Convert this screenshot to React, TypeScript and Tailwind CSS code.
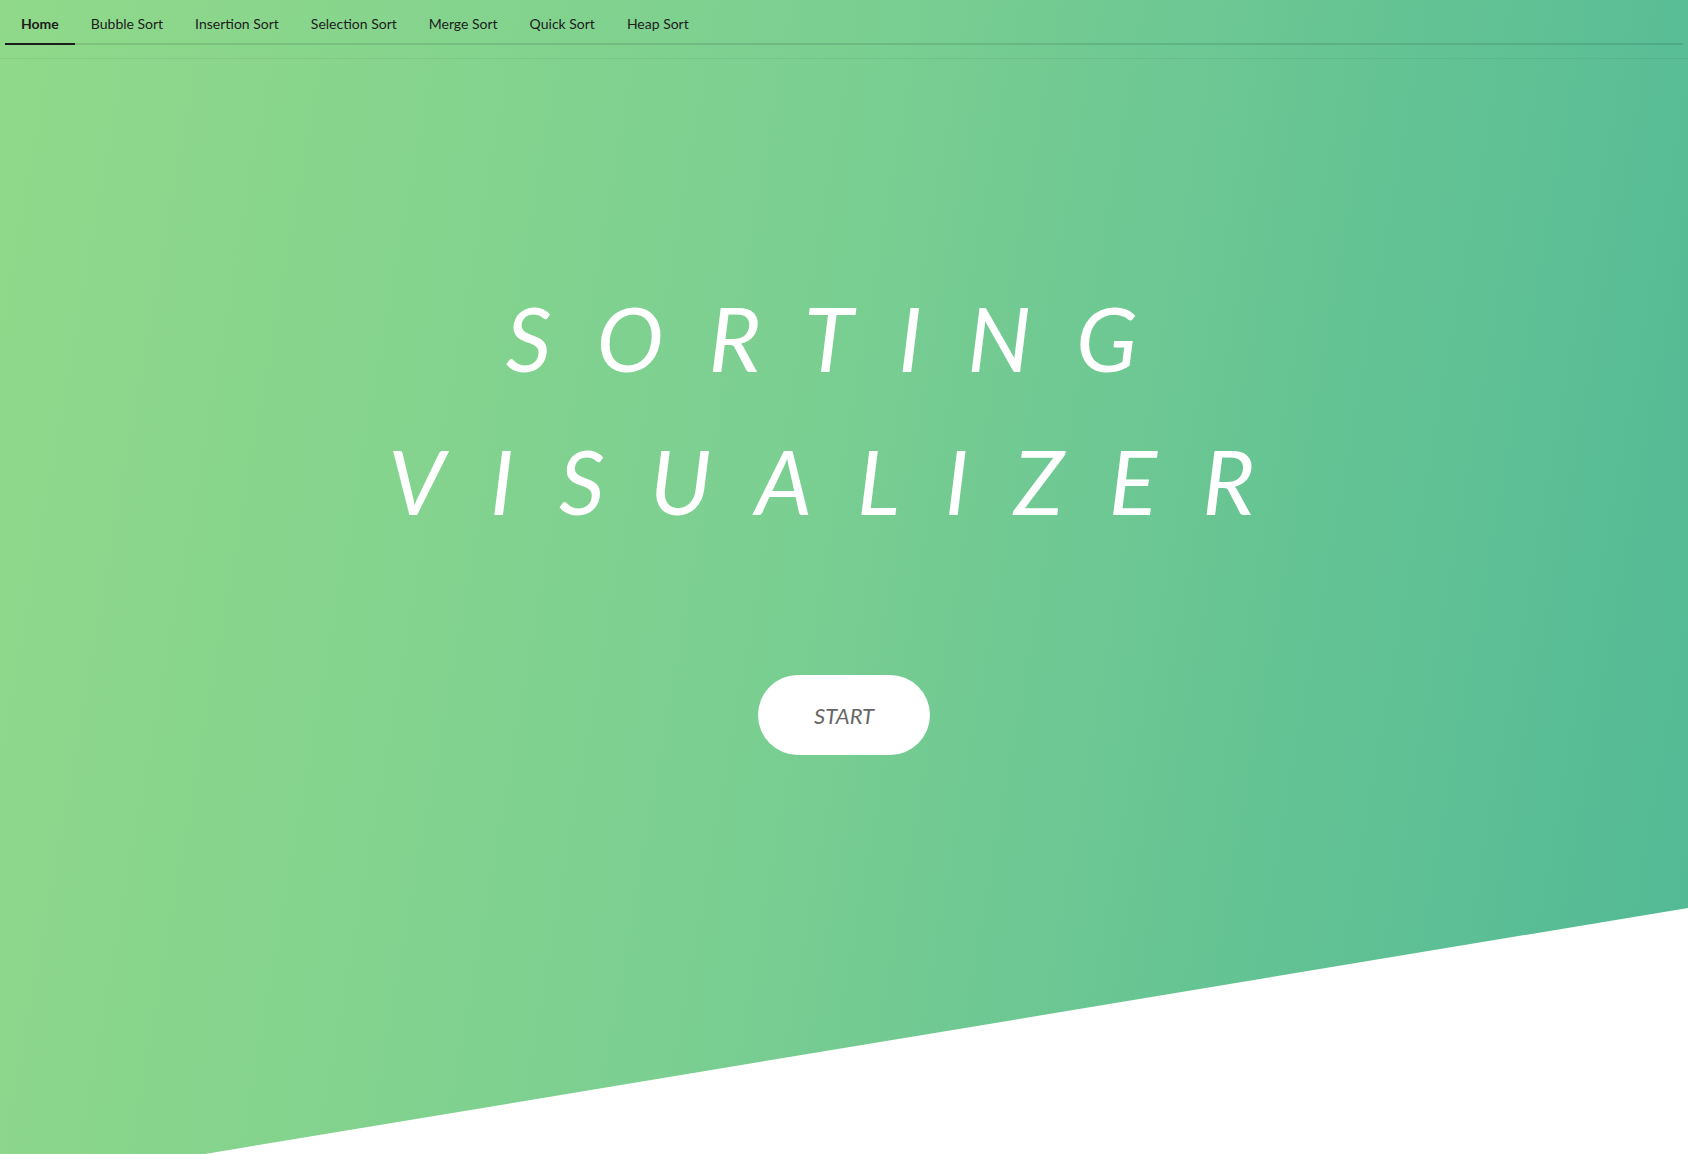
import React from 'react';

const tabs = ['Home', 'Bubble Sort', 'Insertion Sort', 'Selection Sort', 'Merge Sort', 'Quick Sort', 'Heap Sort'];

export default function App() {
  return (
    <div className="relative h-screen w-full overflow-hidden bg-white font-['Lato',sans-serif]">
      {/* hero background with slanted bottom */}
      <div className="absolute inset-0 bg-[linear-gradient(100deg,#90d98a_0%,#7bcf91_45%,#51b996_100%)] [clip-path:polygon(0_0,100%_0,100%_908px,205px_100%,0_100%)]" />

      <div className="relative">
        <header className="h-[59px] border-b border-black/5">
          <nav className="mx-[5px] flex h-[45px] border-b-2 border-black/10">
            {tabs.map((t, i) => (
              <div
                key={t}
                className={`-mb-[2px] flex items-center px-[16px] pt-[4px] text-[14px] text-[#1c1c1c] ${
                  i === 0 ? 'border-b-2 border-[#1c1c1c] font-bold' : 'border-b-2 border-transparent'
                }`}
              >
                {t}
              </div>
            ))}
          </nav>
        </header>

        <section className="flex flex-col items-center pt-[207px]">
          <h1 className="text-center text-[90px] leading-[143px] font-normal italic tracking-[0.5em] text-white">
            SORTING
          </h1>
          <h1 className="text-center text-[90px] leading-[143px] font-normal italic tracking-[0.5em] text-white">
            VISUALIZER
          </h1>

          <button className="mt-[123px] h-[80px] w-[172px] rounded-full bg-white text-[22px] italic text-[#666]">
            START
          </button>
        </section>
      </div>
    </div>
  );
}
